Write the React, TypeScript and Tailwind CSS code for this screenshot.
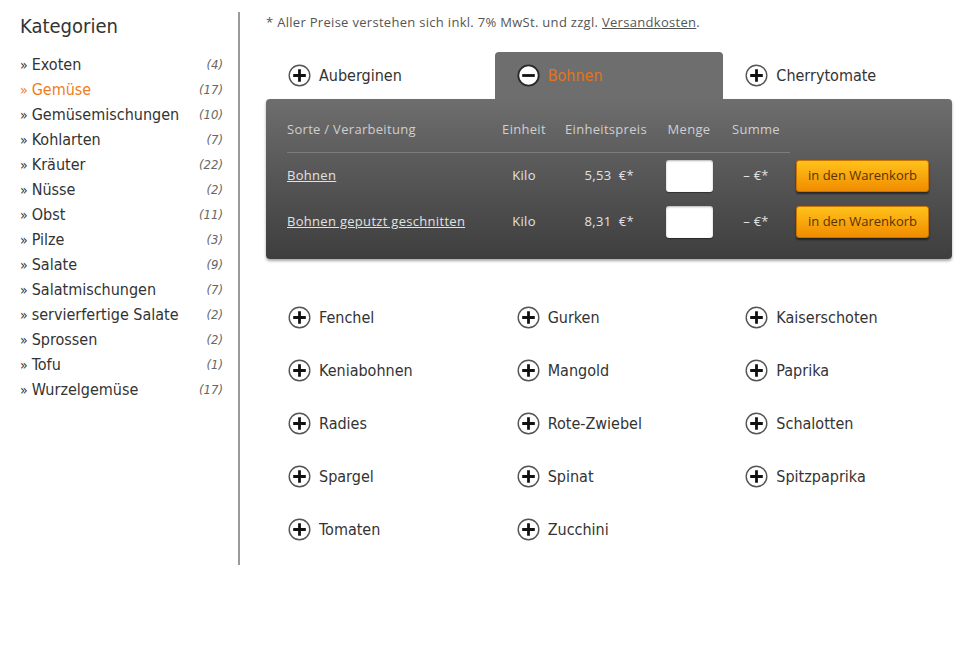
import React from "react";

const cond = { fontFamily: '"Liberation Sans Narrow", "DejaVu Sans Condensed", "Open Sans", sans-serif' };
const body = { fontFamily: '"Open Sans", "DejaVu Sans", sans-serif' };

const cats: [string, number][] = [
  ["Exoten", 4],
  ["Gemüse", 17],
  ["Gemüsemischungen", 10],
  ["Kohlarten", 7],
  ["Kräuter", 22],
  ["Nüsse", 2],
  ["Obst", 11],
  ["Pilze", 3],
  ["Salate", 9],
  ["Salatmischungen", 7],
  ["servierfertige Salate", 2],
  ["Sprossen", 2],
  ["Tofu", 1],
  ["Wurzelgemüse", 17],
];

const items = [
  "Fenchel", "Gurken", "Kaiserschoten",
  "Keniabohnen", "Mangold", "Paprika",
  "Radies", "Rote-Zwiebel", "Schalotten",
  "Spargel", "Spinat", "Spitzpaprika",
  "Tomaten", "Zucchini",
];

function PlusIcon() {
  return (
    <svg width="23" height="23" viewBox="0 0 23 23" className="shrink-0">
      <circle cx="11.5" cy="11.5" r="10.3" fill="#fff" stroke="#555" strokeWidth="1.4" />
      <path d="M11.5 5.2v12.6M5.2 11.5h12.6" stroke="#111" strokeWidth="2.8" strokeLinecap="butt" />
    </svg>
  );
}

function MinusIcon() {
  return (
    <svg width="23" height="23" viewBox="0 0 23 23" className="shrink-0">
      <circle cx="11.5" cy="11.5" r="10.2" fill="#fff" stroke="#2a2a2a" strokeWidth="1.8" />
      <path d="M5.2 11.5h12.6" stroke="#111" strokeWidth="2.8" />
    </svg>
  );
}

function Row({ name }: { name: string }) {
  return (
    <div className="flex items-center h-[32px] text-[13px] tracking-[0.3px] text-[#e2e2e2]">
      <div className="w-[205px]"><span className="underline">{name}</span></div>
      <div className="w-[64px] text-center">Kilo</div>
      <div className="w-[100px] text-right pr-[22px]">{name === "Bohnen" ? "5,53" : "8,31"} &nbsp;€*</div>
      <div className="w-[66px] flex justify-center">
        <div className="w-[47px] h-[32px] bg-white rounded-[3px] shadow-[inset_0_1px_2px_rgba(0,0,0,0.3),0_1px_1px_rgba(0,0,0,0.4)]" />
      </div>
      <div className="w-[68px] text-center">– €*</div>
      <div className="ml-[6px] w-[133px] h-[32px] rounded-[3px] border border-[#c97400] bg-gradient-to-b from-[#ffc21a] to-[#f08c00] shadow-[0_2px_2px_rgba(0,0,0,0.5)] flex items-center justify-center text-[13px] tracking-normal text-[#5a3400]">
        in den Warenkorb
      </div>
    </div>
  );
}

export default function App() {
  return (
    <div className="w-[980px] h-[662px] bg-white flex" style={cond}>
      <aside className="w-[238px] shrink-0 pl-5 pr-[15px] pt-[12px]">
        <h2 className="text-[20px] leading-[28px] text-[#333]">Kategorien</h2>
        <ul className="mt-[12px]">
          {cats.map(([n, c]) => (
            <li key={n} className="flex items-center justify-between h-[25px]">
              <span className={`text-[16px] ${n === "Gemüse" ? "text-[#f07c24]" : "text-[#333]"}`}>
                <span className="text-[14px]">» </span>{n}
              </span>
              <span className="text-[13px] italic text-[#666]">({c})</span>
            </li>
          ))}
        </ul>
      </aside>
      <div className="w-[2px] bg-[#9a9a9a] mt-[12px] h-[553px] shrink-0" />
      <main className="pl-[26px] pt-[14px]">
        <p className="text-[13px] tracking-[0.3px] leading-[16px] text-[#555]" style={body}>
          * Aller Preise verstehen sich inkl. 7% MwSt. und zzgl. <span className="underline">Versandkosten</span>.
        </p>
        <div className="mt-[22px] w-[686px]">
          <div className="grid grid-cols-3 h-[47px]">
            <div className="flex items-center gap-[8px] pl-[22px]">
              <PlusIcon />
              <span className="text-[16px] text-[#333]">Auberginen</span>
            </div>
            <div className="flex items-center gap-[8px] pl-[22px] bg-[#6e6e6e] rounded-t-[4px]">
              <MinusIcon />
              <span className="text-[16px] text-[#e3741c]">Bohnen</span>
            </div>
            <div className="flex items-center gap-[8px] pl-[22px]">
              <PlusIcon />
              <span className="text-[16px] text-[#333]">Cherrytomate</span>
            </div>
          </div>
          <div className="rounded-[4px] bg-gradient-to-b from-[#6e6e6e] to-[#3e3e3e] shadow-[0_2px_3px_rgba(0,0,0,0.35)] pl-[21px] pt-[15px] pb-[21px]" style={body}>
            <div className="flex items-center h-[32px] text-[13px] tracking-[0.3px] text-[#cfcfcf]">
              <div className="w-[205px]">Sorte / Verarbeitung</div>
              <div className="w-[64px] text-center">Einheit</div>
              <div className="w-[100px] text-center">Einheitspreis</div>
              <div className="w-[66px] text-center">Menge</div>
              <div className="w-[68px] text-center">Summe</div>
            </div>
            <div className="mt-[6px] h-px w-[503px] bg-[#7c7c7c]" />
            <div className="mt-[7px]"><Row name="Bohnen" /></div>
            <div className="mt-[14px]"><Row name="Bohnen geputzt geschnitten" /></div>
          </div>
          <div className="grid grid-cols-3 mt-[32px]">
            {items.map((it) => (
              <div key={it} className="flex items-center gap-[8px] pl-[22px] h-[53px]">
                <PlusIcon />
                <span className="text-[16px] text-[#333]">{it}</span>
              </div>
            ))}
          </div>
        </div>
      </main>
    </div>
  );
}
